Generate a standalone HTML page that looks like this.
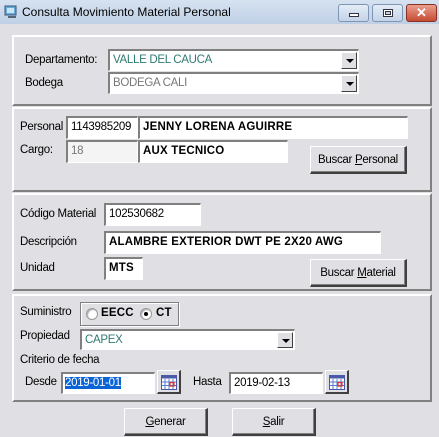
<!DOCTYPE html>
<html><head><meta charset="utf-8">
<style>
*{box-sizing:border-box;margin:0;padding:0}
body{width:439px;height:437px;background:#e0dfe3;font-family:"Liberation Sans",sans-serif;font-size:11px;color:#000;position:relative;overflow:hidden}
.a{position:absolute}
.l{font-size:11.5px;letter-spacing:-0.3px}
.title{left:0;top:0;width:439px;height:24px;background:linear-gradient(#d6e2f0,#bfd0e6);}
.tt{left:22px;top:5px;font-size:12px;color:#000}
.wb{top:4px;height:18px;width:31px;border:1px solid #7f93b2;border-radius:3px;background:linear-gradient(#e4ecf6,#c3d3e8)}
.panel{left:12px;width:420px;border-top:2px solid #fff;border-left:2px solid #fff;border-right:2px solid #808080;border-bottom:2px solid #808080}
.in{background:#fff;border-top:2px solid #808080;border-left:2px solid #808080;border-right:1px solid #fff;border-bottom:1px solid #fff;padding:3px 0 0 3px;height:23px;white-space:nowrap;overflow:hidden;font-size:11.5px;letter-spacing:-0.3px}
.b{font-weight:bold;font-size:11.5px;letter-spacing:.2px}
.dd{position:absolute;right:1px;top:1px;width:16px;height:17px;background:#e0dfe3;border-top:1px solid #fff;border-left:1px solid #fff;border-right:1px solid #404040;border-bottom:1px solid #404040}
.dd:after{content:"";position:absolute;left:4px;top:6px;border-left:4px solid transparent;border-right:4px solid transparent;border-top:4px solid #000}
.btn{background:#e0dfe3;border-top:1px solid #fff;border-left:1px solid #fff;border-right:2px solid #404040;border-bottom:2px solid #404040;text-align:center;font-size:11.5px;letter-spacing:-0.3px;box-shadow:inset -1px -1px 0 #808080}
.cal{width:24px;height:24px;background:#e0dfe3;border-top:1px solid #fff;border-left:1px solid #fff;border-right:2px solid #404040;border-bottom:2px solid #404040}
.rb{width:12px;height:12px;border-radius:50%;background:#fff;border:1px solid #999;box-shadow:inset 1px 1px 1px #aaa}
</style></head><body>
<div class="a title"></div>
<svg class="a" style="left:4px;top:5px" width="14" height="14" viewBox="0 0 14 14"><rect x="1" y="1" width="11" height="9" fill="#6aa9d8" stroke="#35587c"/><rect x="3" y="3" width="7" height="5" fill="#c9e6f8"/><rect x="4" y="11" width="8" height="2" fill="#567"/></svg>
<div class="a tt">Consulta Movimiento Material Personal</div>
<div class="a wb" style="left:338px"><div class="a" style="left:10px;top:8px;width:10px;height:4px;background:#fff;border:1px solid #334"></div></div>
<div class="a wb" style="left:372px"><div class="a" style="left:10px;top:4px;width:10px;height:8px;border:1px solid #334;background:#fff"></div><div class="a" style="left:12px;top:6px;width:6px;height:4px;border:1px solid #334;background:#c3d3e8"></div></div>
<div class="a wb" style="left:406px;background:linear-gradient(#e9a08e,#c64b33);border-color:#8a3020;color:#fff;font-weight:bold;font-size:13px;text-align:center;line-height:15px">✕</div>

<div class="a panel" style="top:35px;height:71px"></div>
<div class="a l" style="left:25px;top:54px">Departamento:</div>
<div class="a in" style="left:108px;top:49px;width:251px;height:22px;color:#2e7a72">VALLE DEL CAUCA<div class="dd"></div></div>
<div class="a l" style="left:25px;top:77px">Bodega</div>
<div class="a in" style="left:108px;top:72px;width:251px;height:22px;color:#777">BODEGA CALI<div class="dd"></div></div>

<div class="a panel" style="top:107px;height:85px"></div>
<div class="a l" style="left:20px;top:121px">Personal</div>
<div class="a in" style="left:66px;top:116px;width:72px">1143985209</div>
<div class="a in b" style="left:138px;top:116px;width:270px">JENNY LORENA AGUIRRE</div>
<div class="a l" style="left:20px;top:144px">Cargo:</div>
<div class="a in" style="left:66px;top:140px;width:72px;background:#f4f4f4;color:#777">18</div>
<div class="a in b" style="left:138px;top:140px;width:150px">AUX TECNICO</div>
<div class="a btn" style="left:310px;top:146px;width:97px;height:28px;padding-top:7px">Buscar <u>P</u>ersonal</div>

<div class="a panel" style="top:193px;height:98px"></div>
<div class="a l" style="left:20px;top:208px">Código Material</div>
<div class="a in" style="left:104px;top:203px;width:97px">102530682</div>
<div class="a l" style="left:20px;top:236px">Descripción</div>
<div class="a in b" style="left:104px;top:231px;width:277px">ALAMBRE EXTERIOR DWT PE 2X20 AWG</div>
<div class="a l" style="left:20px;top:262px">Unidad</div>
<div class="a in b" style="left:104px;top:257px;width:39px">MTS</div>
<div class="a btn" style="left:310px;top:259px;width:97px;height:28px;padding-top:7px">Buscar <u>M</u>aterial</div>

<div class="a panel" style="top:294px;height:108px"></div>
<div class="a l" style="left:20px;top:306px">Suministro</div>
<div class="a" style="left:80px;top:302px;width:99px;height:24px;border:1px solid #808080;box-shadow:inset 1px 1px 0 #fff,1px 1px 0 #fff"></div>
<div class="a rb" style="left:86px;top:308px"></div>
<div class="a b" style="left:101px;top:307px">EECC</div>
<div class="a rb" style="left:140px;top:308px"><div class="a" style="left:3px;top:3px;width:4px;height:4px;border-radius:50%;background:#000"></div></div>
<div class="a b" style="left:156px;top:307px">CT</div>
<div class="a l" style="left:20px;top:330px">Propiedad</div>
<div class="a in" style="left:80px;top:329px;width:215px;height:21px;color:#2e7a72">CAPEX<div class="dd" style="height:16px"></div></div>
<div class="a l" style="left:20px;top:354px">Criterio de fecha</div>
<div class="a l" style="left:25px;top:376px">Desde</div>
<div class="a in" style="left:61px;top:372px;width:94px;height:22px;padding-left:2px"><span style="background:#0a64d6;color:#fff">2019-01-01</span></div>
<div class="a cal" style="left:157px;top:370px"><svg class="a" style="left:3px;top:3px" width="16" height="16" viewBox="0 0 16 16"><rect x="0.5" y="1.5" width="15" height="14" fill="#fff" stroke="#4a5aa8"/><rect x="0.5" y="1.5" width="15" height="3" fill="#4a5aa8"/><path d="M4 5v10M8 5v10M12 5v10M1 8h14M1 11.5h14" stroke="#5b7bd0" stroke-width="1"/><rect x="9" y="8.5" width="4" height="3.5" fill="none" stroke="#e0301e" stroke-width="1.2"/></svg></div>
<div class="a l" style="left:193px;top:376px">Hasta</div>
<div class="a in" style="left:229px;top:372px;width:94px;height:22px">2019-02-13</div>
<div class="a cal" style="left:325px;top:370px"><svg class="a" style="left:3px;top:3px" width="16" height="16" viewBox="0 0 16 16"><rect x="0.5" y="1.5" width="15" height="14" fill="#fff" stroke="#4a5aa8"/><rect x="0.5" y="1.5" width="15" height="3" fill="#4a5aa8"/><path d="M4 5v10M8 5v10M12 5v10M1 8h14M1 11.5h14" stroke="#5b7bd0" stroke-width="1"/><rect x="9" y="8.5" width="4" height="3.5" fill="none" stroke="#e0301e" stroke-width="1.2"/></svg></div>

<div class="a btn" style="left:124px;top:408px;width:84px;height:28px;padding-top:7px"><u>G</u>enerar</div>
<div class="a btn" style="left:232px;top:408px;width:84px;height:28px;padding-top:7px"><u>S</u>alir</div>
</body></html>
